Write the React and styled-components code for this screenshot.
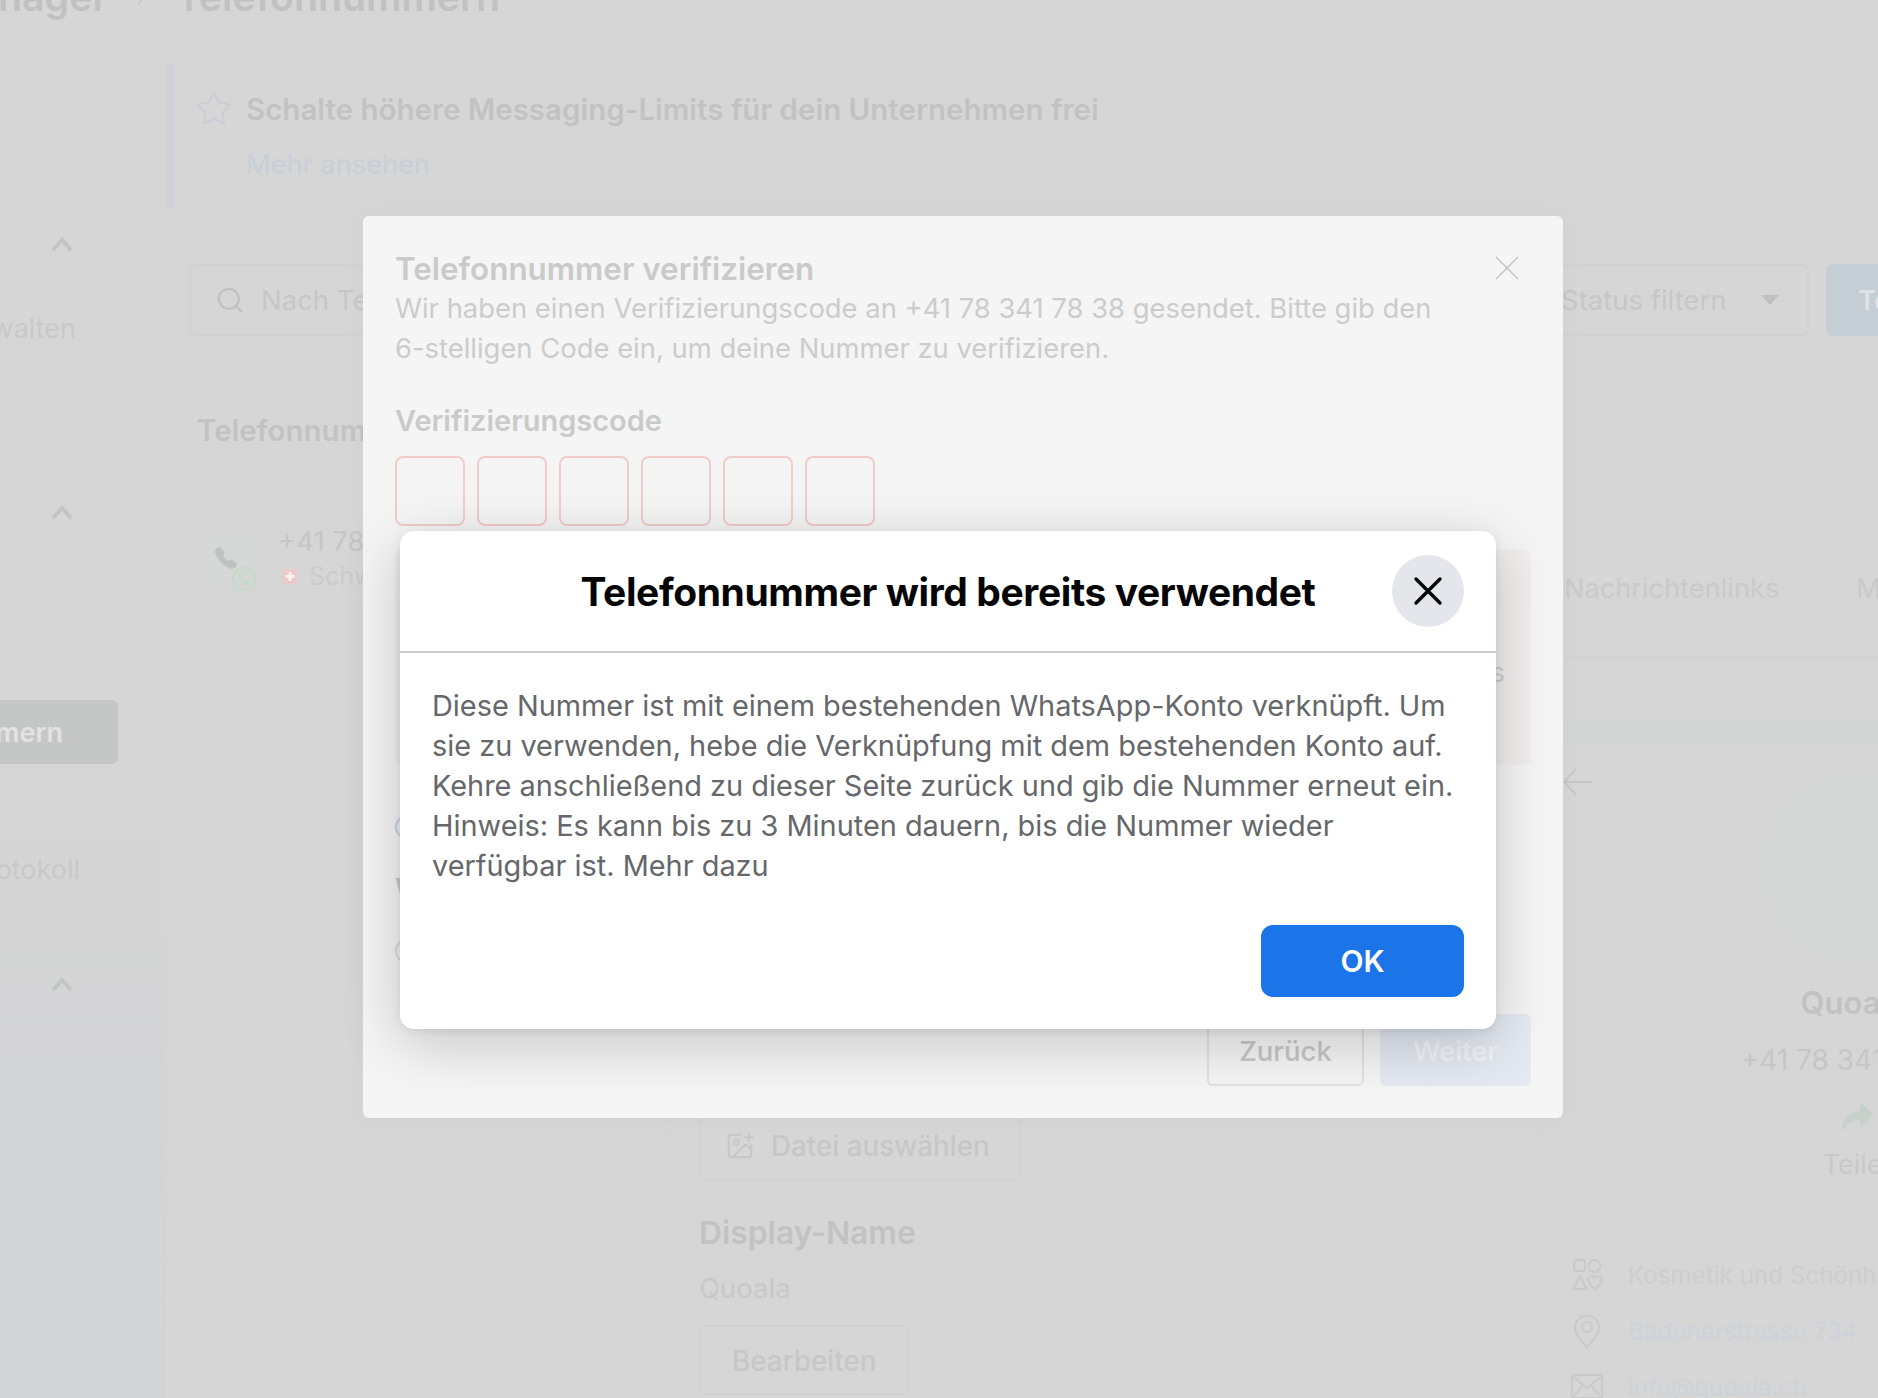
import React from "react";
import styled, { createGlobalStyle } from "styled-components";
import { ChevronRight, ImagePlus, Search, Star } from "lucide-react";
import { BsTelephoneFill } from "react-icons/bs";
import { FaWhatsapp } from "react-icons/fa";

const GlobalStyle = createGlobalStyle`
  html, body {
    margin: 0;
    padding: 0;
    background: #d6d6d6;
  }
  * {
    box-sizing: border-box;
  }
  body {
    font-family: Inter, "Liberation Sans", sans-serif;
    -webkit-font-smoothing: antialiased;
  }
`;

const Page = styled.div`
  position: relative;
  display: flex;
  width: 1878px;
  height: 1398px;
  overflow: hidden;
  background: #d6d6d6;
`;

/* sidebar, scrolled off to the left in the picture */
const Sidebar = styled.aside`
  flex: 0 0 166px;
  min-width: 0;
  width: 166px;
  display: flex;
  flex-direction: column;
  background: linear-gradient(#d6d6d6 40%, #d3d4d6);
`;

const SideChevron = styled.div`
  display: flex;
  align-items: center;
  justify-content: flex-end;
  height: 24px;
  margin-top: ${(p) => p.$top}px;
  padding-right: 92px;
  color: #c3c4c4;
`;

const SideItem = styled.div`
  display: flex;
  justify-content: flex-end;
  height: 36px;
  margin-top: ${(p) => p.$top}px;
  padding-right: ${(p) => p.$right}px;
  font-size: 27px;
  line-height: 36px;
  color: #c8c9c9;
  white-space: nowrap;
`;

const SideActive = styled.div`
  display: flex;
  align-items: center;
  justify-content: flex-end;
  width: 118px;
  height: 64px;
  margin-top: ${(p) => p.$top}px;
  padding-right: 55px;
  border-radius: 0 6px 6px 0;
  background: #c5c7c6;
  color: #e2e3e3;
  font-size: 27px;
  font-weight: 600;
  white-space: nowrap;
`;

const Main = styled.main`
  flex: 1;
  min-width: 0;
  display: flex;
  flex-direction: column;
`;

const Breadcrumb = styled.div`
  display: flex;
  align-items: center;
  height: 40px;
  margin: -24px 0 0 -166px;
  font-size: 39.3px;
  font-weight: 600;
  color: #c0c2c2;
  white-space: nowrap;
`;

const CrumbFirst = styled.span`
  display: flex;
  justify-content: flex-end;
  width: 108px;
`;

const CrumbSep = styled.span`
  display: flex;
  justify-content: center;
  width: 68px;
  color: #c8c9c9;
`;

const Banner = styled.section`
  display: flex;
  gap: 13px;
  height: 144px;
  margin-top: 48px;
  padding: 27px 24px 27px 21px;
  border-left: 8px solid #cfd0d9;
  border-top: 1px solid #d3d4d4;
  border-radius: 6px 0 0 6px;
`;

const BannerStar = styled(Star)`
  flex: 0 0 38px;
  margin-top: -2px;
  color: #cbccd6;
`;

const BannerText = styled.div`
  display: flex;
  flex-direction: column;
  gap: 22px;
`;

const BannerTitle = styled.div`
  font-size: 29.5px;
  line-height: 34px;
  font-weight: 600;
  color: #c1c3c3;
  white-space: nowrap;
`;

const BannerLink = styled.div`
  font-size: 27.2px;
  line-height: 34px;
  color: #c7d0d9;
`;

const Toolbar = styled.section`
  display: flex;
  align-items: center;
  justify-content: space-between;
  height: 120px;
  margin-top: 32px;
  padding: 0 0 0 22px;
  border: 1px solid #d3d4d4;
  border-right: 0;
  border-radius: 6px 0 0 6px;
`;

const SearchBox = styled.div`
  display: flex;
  align-items: center;
  gap: 16px;
  width: 600px;
  height: 72px;
  padding: 0 24px;
  border: 2px solid #d1d2d2;
  border-radius: 6px;
  color: #c6c7c7;
  font-size: 27.5px;
  white-space: nowrap;
`;

const ToolbarRight = styled.div`
  display: flex;
  align-items: center;
  gap: 17px;
`;

const StatusSelect = styled.div`
  display: flex;
  align-items: center;
  justify-content: space-between;
  width: 260px;
  height: 72px;
  padding: 0 28px 0 10px;
  border: 2px solid #d1d2d2;
  border-radius: 6px;
  color: #c6c7c7;
  font-size: 27.5px;
  white-space: nowrap;
`;

const Caret = styled.span`
  width: 0;
  height: 0;
  border-left: 9px solid transparent;
  border-right: 9px solid transparent;
  border-top: 10px solid #bfc0c0;
`;

const AddButton = styled.div`
  display: flex;
  align-items: center;
  width: 52px;
  height: 72px;
  padding-left: 32px;
  overflow: hidden;
  border-radius: 6px 0 0 6px;
  background: #c5cdd5;
  color: #dfe3e7;
  font-size: 27.5px;
  font-weight: 600;
`;

const Columns = styled.div`
  flex: 1;
  min-height: 0;
  display: flex;
`;

const ListColumn = styled.section`
  flex: 0 0 498px;
  display: flex;
  flex-direction: column;
  padding-top: 12px;
`;

const ListHead = styled.div`
  display: flex;
  align-items: center;
  height: 114px;
  padding: 2px 30px 0;
  border: 1px solid #d3d4d4;
  font-size: 29.5px;
  font-weight: 600;
  color: #c1c3c3;
  white-space: nowrap;
`;

const NumberRow = styled.div`
  display: flex;
  gap: 14px;
  padding: 43px 0 0 34px;
`;

const NumberIcon = styled.div`
  position: relative;
  display: flex;
  align-items: center;
  justify-content: center;
  width: 64px;
  height: 64px;
  border-radius: 50%;
  background: #d5d7d6;
  color: #c0c1c1;
`;

const PhoneGlyph = styled(BsTelephoneFill)`
  transform: translate(-6px, -3px);
`;

const WaBadge = styled.span`
  position: absolute;
  right: 6px;
  bottom: 0;
  display: flex;
  color: #c4dbc9;
`;

const NumberText = styled.div`
  display: flex;
  flex-direction: column;
  gap: 3px;
  margin-top: -5px;
`;

const NumberValue = styled.div`
  font-size: 27.5px;
  line-height: 34px;
  color: #c5c6c6;
  white-space: nowrap;
`;

const Country = styled.div`
  display: flex;
  align-items: center;
  gap: 12px;
  padding-left: 5px;
  font-size: 25px;
  line-height: 30px;
  color: #cbcccc;
`;

const DetailColumn = styled.section`
  flex: 1;
  min-width: 0;
  display: flex;
  flex-direction: column;
`;

const Tabs = styled.nav`
  flex: 0 0 298px;
  display: flex;
  align-items: flex-end;
  gap: 77px;
  padding: 0 0 50px 900px;
  border-bottom: 2px solid #d2d3d3;
  font-size: 27.2px;
  line-height: 34px;
  color: #c9caca;
  white-space: nowrap;
`;

const DetailBody = styled.div`
  flex: 1;
  min-height: 0;
  display: flex;
`;

const FormColumn = styled.div`
  flex: 0 0 876px;
  display: flex;
  flex-direction: column;
  justify-content: flex-end;
  align-items: flex-start;
  padding: 0 0 3px 34px;
  border-left: 1px solid #d3d4d4;
  border-right: 1px solid #d3d4d4;
`;

const GhostButton = styled.div`
  display: flex;
  align-items: center;
  gap: 16px;
  width: ${(p) => p.$width}px;
  height: ${(p) => p.$height}px;
  padding: 2px ${(p) => p.$pad}px 0;
  border: 2px solid #d1d2d2;
  border-radius: 6px;
  font-size: 27.8px;
  font-weight: 500;
  color: #c6c7c7;
  white-space: nowrap;
`;

const FieldTitle = styled.div`
  margin-top: 33px;
  font-size: 31.8px;
  line-height: 38px;
  font-weight: 600;
  color: #c1c3c3;
`;

const FieldValue = styled.div`
  margin: 19px 0 20px;
  font-size: 27.5px;
  line-height: 34px;
  color: #c8c9c9;
`;

const Preview = styled.aside`
  flex: 0 0 604px;
  display: flex;
  flex-direction: column;
  padding-left: 23px;

  & > * {
    flex-shrink: 0;
  }
`;

const PreviewBar = styled.div`
  height: 30px;
  margin-top: 60px;
  background: #d4d6d5;
`;

const BackRow = styled.div`
  display: flex;
  height: 30px;
  margin: 20px 0 -26px -1px;
  color: #c6c7c7;
`;

const ProfileHead = styled.div`
  display: flex;
  flex-direction: column;
  align-items: center;
`;

const Avatar = styled.div`
  width: 192px;
  height: 192px;
  border-radius: 50%;
  background: #d5d6d6;
  box-shadow: 0 0 0 1px #d3d4d4;
`;

const ProfileName = styled.div`
  margin-top: 19px;
  font-size: 31px;
  line-height: 40px;
  font-weight: 600;
  color: #c1c3c3;
`;

const ProfilePhone = styled.div`
  margin-top: 19px;
  font-size: 28px;
  line-height: 36px;
  color: #c5c6c6;
  white-space: nowrap;
`;

const ShareIcon = styled.div`
  display: flex;
  margin: 23px 0 0 6px;
  color: #c7d1cb;
`;

const ShareLabel = styled.div`
  margin: 15px 0 0 14px;
  font-size: 27px;
  line-height: 34px;
  color: #c8c9c9;
`;

const InfoList = styled.ul`
  display: flex;
  flex-direction: column;
  gap: 22px;
  margin: 76px 0 0;
  padding: 0 0 0 8px;
  list-style: none;
`;

const InfoRow = styled.li`
  display: flex;
  align-items: center;
  gap: 25px;
  height: 34px;
  font-size: 24.2px;
  color: ${(p) => (p.$link ? "#ccd3da" : "#cdcece")};
  white-space: nowrap;
`;

const InfoGlyph = styled.span`
  display: flex;
  flex: 0 0 32px;
  color: #c8c9c9;
`;

/* first dialog, lying over the page */
const VerifyDialog = styled.div`
  position: absolute;
  left: 363px;
  top: 216px;
  display: flex;
  flex-direction: column;
  width: 1200px;
  height: 902px;
  padding: 36px 32px 32px 32px;
  border-radius: 6px;
  background: #f5f5f5;
  box-shadow: 0 0 24px rgba(0, 0, 0, 0.03);
`;

const VerifyClose = styled.div`
  position: absolute;
  top: 40px;
  right: 44px;
  display: flex;
  color: #c4c5c5;
`;

const VerifyTitle = styled.div`
  font-size: 31.4px;
  line-height: 34px;
  font-weight: 600;
  color: #c9caca;
`;

const VerifyText = styled.p`
  margin: 2px 0 0;
  font-size: 27.4px;
  line-height: 40px;
  color: #cbcccc;
  white-space: nowrap;
`;

const CodeLabel = styled.div`
  margin-top: 35px;
  font-size: 29px;
  line-height: 36px;
  font-weight: 600;
  color: #c9caca;
`;

const CodeRow = styled.div`
  display: flex;
  gap: 12px;
  margin-top: 17px;
`;

const CodeBox = styled.div`
  width: 70px;
  height: 70px;
  border: 2px solid #f1ccc9;
  border-radius: 8px;
`;

const ErrorBox = styled.div`
  height: 215px;
  margin-top: 24px;
  padding: 30px 26px 0 0;
  display: flex;
  align-items: center;
  justify-content: flex-end;
  border-radius: 6px;
  background: #f2eeed;
  color: #cfcfcf;
  font-size: 27px;
`;

const PeekRadio = styled.div`
  flex: 0 0 24px;
  width: 24px;
  height: 24px;
  margin-top: ${(p) => p.$top}px;
  border: 2px solid ${(p) => p.$color};
  border-radius: 50%;
`;

const PeekLetter = styled.div`
  margin-top: 32px;
  font-size: 29px;
  font-weight: 600;
  line-height: 36px;
  color: #c9caca;
`;

const VerifyFooter = styled.div`
  display: flex;
  justify-content: flex-end;
  gap: 16px;
  margin-top: auto;
`;

const BackButton = styled.div`
  display: flex;
  align-items: center;
  justify-content: center;
  width: 157px;
  height: 72px;
  padding-top: 2px;
  border: 2px solid #e1e1e1;
  border-radius: 6px;
  font-size: 27.5px;
  font-weight: 500;
  color: #c6c7c7;
`;

const NextButton = styled.div`
  display: flex;
  align-items: center;
  justify-content: center;
  width: 151px;
  height: 72px;
  padding-top: 2px;
  border-radius: 6px;
  background: #e4e9f2;
  font-size: 27.5px;
  font-weight: 500;
  color: #f2f4f8;
`;

/* second dialog on top of the first */
const AlertDialog = styled.div`
  position: absolute;
  left: 400px;
  top: 531px;
  display: flex;
  flex-direction: column;
  width: 1096px;
  height: 498px;
  border-radius: 14px;
  background: #fff;
  box-shadow: 0 14px 60px rgba(0, 0, 0, 0.2), 0 2px 8px rgba(0, 0, 0, 0.08);
`;

const AlertHead = styled.header`
  position: relative;
  display: flex;
  align-items: center;
  justify-content: center;
  flex: 0 0 122px;
  padding-top: 2px;
  border-bottom: 2px solid #cdccd3;
`;

const AlertTitle = styled.h2`
  margin: 0;
  font-size: 39px;
  line-height: 48px;
  font-weight: 700;
  letter-spacing: -0.4px;
  color: #050505;
`;

const CloseCircle = styled.button`
  position: absolute;
  top: 24px;
  right: 32px;
  display: flex;
  align-items: center;
  justify-content: center;
  width: 72px;
  height: 72px;
  padding: 0;
  border: 0;
  border-radius: 50%;
  background: #e4e6eb;
  color: #050505;
`;

const AlertBody = styled.p`
  margin: 0;
  padding: 33px 32px 0;
  font-size: 28.9px;
  line-height: 40px;
  color: #65676b;
  white-space: nowrap;
`;

const AlertFooter = styled.div`
  display: flex;
  justify-content: flex-end;
  margin-top: auto;
  padding: 0 32px 32px;
`;

const OkButton = styled.button`
  width: 203px;
  height: 72px;
  border: 0;
  border-radius: 12px;
  background: #1b74e8;
  color: #fff;
  font-family: inherit;
  font-size: 30px;
  font-weight: 600;
`;

const UpChevron = () => (
  <svg width="24" height="16" viewBox="0 0 24 16" fill="none" stroke="currentColor" strokeWidth="4">
    <path d="M3 14L12 4l9 10" />
  </svg>
);

const BackArrow = () => (
  <svg width="30" height="28" viewBox="0 0 30 28" fill="none" stroke="currentColor" strokeWidth="2">
    <path d="M14 1L2 14l12 13M2 14h28" />
  </svg>
);

const CategoryIcon = () => (
  <svg width="32" height="32" viewBox="0 0 32 32" fill="none" stroke="currentColor" strokeWidth="1.8">
    <rect x="3" y="1" width="11" height="11" rx="3" />
    <circle cx="23.5" cy="7" r="6" />
    <path d="M9 17l6.5 13h-13z" strokeLinejoin="round" />
    <path d="M24 30c-4-3-7-5.5-7-9 0-4 5-5 7-2 2-3 7-2 7 2 0 3.500-3 6-7 9z" strokeLinejoin="round" />
  </svg>
);

const PinIcon = () => (
  <svg width="32" height="34" viewBox="0 0 32 34" fill="none" stroke="currentColor" strokeWidth="1.8">
    <path d="M16 33C9 25 4 20 4 13.500a12 12 0 0 1 24 0C28 20 23 25 16 33z" strokeLinejoin="round" />
    <circle cx="16" cy="13" r="5" />
  </svg>
);

const MailIcon = () => (
  <svg width="32" height="26" viewBox="0 0 32 26" fill="none" stroke="currentColor" strokeWidth="1.8">
    <rect x="1" y="1" width="30" height="23" rx="2" />
    <path d="M1.500 2L16 14 30.500 2M1.500 23.500L12 11M30.500 23.500L20 11" />
  </svg>
);

const ShareArrow = () => (
  <svg width="34" height="32" viewBox="0 0 34 32" fill="currentColor">
    <path d="M20 1l14 13-14 13v-8C12 19 6 22 2 31c0-12 6-20 18-21z" />
  </svg>
);

const SwissFlag = () => (
  <svg width="14" height="15" viewBox="0 0 14 15">
    <rect width="14" height="15" fill="#efc9c9" />
    <path d="M5.500 3h3v3h3v3h-3v3h-3V9h-3V6h3z" fill="#f6f0f0" />
  </svg>
);

const tabs = ["Nachrichtenlinks", "Metadaten"];
const codeFields = [0, 1, 2, 3, 4, 5];

export default function App() {
  return (
    <>
      <GlobalStyle />
      <Page>
        <Sidebar>
          <SideChevron $top={232}>
            <UpChevron />
          </SideChevron>
          <SideItem $top={55} $right={90}>verwalten</SideItem>
          <SideChevron $top={153}>
            <UpChevron />
          </SideChevron>
          <SideActive $top={176}>Telefonnummern</SideActive>
          <SideItem $top={88} $right={86}>Aktivitätsprotokoll</SideItem>
          <SideChevron $top={84}>
            <UpChevron />
          </SideChevron>
        </Sidebar>

        <Main>
          <Breadcrumb>
            <CrumbFirst>Manager</CrumbFirst>
            <CrumbSep>
              <ChevronRight size={30} strokeWidth={1.5} />
            </CrumbSep>
            <span>Telefonnummern</span>
          </Breadcrumb>

          <Banner>
            <BannerStar size={38} strokeWidth={1.2} />
            <BannerText>
              <BannerTitle>Schalte höhere Messaging-Limits für dein Unternehmen frei</BannerTitle>
              <BannerLink>Mehr ansehen</BannerLink>
            </BannerText>
          </Banner>

          <Toolbar>
            <SearchBox>
              <Search size={30} strokeWidth={1.8} color="#c0c1c1" />
              Nach Telefonnummer suchen
            </SearchBox>
            <ToolbarRight>
              <StatusSelect>
                Status filtern
                <Caret />
              </StatusSelect>
              <AddButton>Telefonnummer</AddButton>
            </ToolbarRight>
          </Toolbar>

          <Columns>
            <ListColumn>
              <ListHead>Telefonnummern</ListHead>
              <NumberRow>
                <NumberIcon>
                  <PhoneGlyph size={22} />
                  <WaBadge>
                    <FaWhatsapp size={28} />
                  </WaBadge>
                </NumberIcon>
                <NumberText>
                  <NumberValue>+41 78 341 78 38</NumberValue>
                  <Country>
                    <SwissFlag />
                    Schweiz
                  </Country>
                </NumberText>
              </NumberRow>
            </ListColumn>

            <DetailColumn>
              <Tabs>
                {tabs.map((tab) => (
                  <span key={tab}>{tab}</span>
                ))}
              </Tabs>
              <DetailBody>
                <FormColumn>
                  <GhostButton $pad={24} $height={72} $width={322}>
                    <ImagePlus size={30} strokeWidth={1.6} />
                    Datei auswählen
                  </GhostButton>
                  <FieldTitle>Display-Name</FieldTitle>
                  <FieldValue>Quoala</FieldValue>
                  <GhostButton $pad={31} $height={70} $width={210}>Bearbeiten</GhostButton>
                </FormColumn>
                <Preview>
                  <PreviewBar />
                  <BackRow>
                    <BackArrow />
                  </BackRow>
                  <ProfileHead>
                    <Avatar />
                    <ProfileName>Quoala</ProfileName>
                    <ProfilePhone>+41 78 341 78 38</ProfilePhone>
                    <ShareIcon>
                      <ShareArrow />
                    </ShareIcon>
                    <ShareLabel>Teilen</ShareLabel>
                  </ProfileHead>
                  <InfoList>
                    <InfoRow>
                      <InfoGlyph>
                        <CategoryIcon />
                      </InfoGlyph>
                      Kosmetik und Schönheit
                    </InfoRow>
                    <InfoRow $link>
                      <InfoGlyph>
                        <PinIcon />
                      </InfoGlyph>
                      Badenerstrasse 734
                    </InfoRow>
                    <InfoRow $link>
                      <InfoGlyph>
                        <MailIcon />
                      </InfoGlyph>
                      info@quoala.ch
                    </InfoRow>
                  </InfoList>
                </Preview>
              </DetailBody>
            </DetailColumn>
          </Columns>
        </Main>

        <VerifyDialog>
          <VerifyClose>
            <svg width="24" height="24" viewBox="0 0 24 24" fill="none" stroke="currentColor" strokeWidth="1.6">
              <path d="M1 1l22 22M23 1L1 23" />
            </svg>
          </VerifyClose>
          <VerifyTitle>Telefonnummer verifizieren</VerifyTitle>
          <VerifyText>
            Wir haben einen Verifizierungscode an +41 78 341 78 38 gesendet. Bitte gib den
            <br />
            6-stelligen Code ein, um deine Nummer zu verifizieren.
          </VerifyText>
          <CodeLabel>Verifizierungscode</CodeLabel>
          <CodeRow>
            {codeFields.map((field) => (
              <CodeBox key={field} />
            ))}
          </CodeRow>
          <ErrorBox>s</ErrorBox>
          <PeekRadio $top={50} $color="#c5d6ea" />
          <PeekLetter>W</PeekLetter>
          <PeekRadio $top={32} $color="#dddddd" />
          <VerifyFooter>
            <BackButton>Zurück</BackButton>
            <NextButton>Weiter</NextButton>
          </VerifyFooter>
        </VerifyDialog>

        <AlertDialog>
          <AlertHead>
            <AlertTitle>Telefonnummer wird bereits verwendet</AlertTitle>
            <CloseCircle>
              <svg width="30" height="30" viewBox="0 0 30 30" fill="none" stroke="currentColor" strokeWidth="3.4" strokeLinecap="round">
                <path d="M3 3l24 24M27 3L3 27" />
              </svg>
            </CloseCircle>
          </AlertHead>
          <AlertBody>
            Diese Nummer ist mit einem bestehenden WhatsApp-Konto verknüpft. Um
            <br />
            sie zu verwenden, hebe die Verknüpfung mit dem bestehenden Konto auf.
            <br />
            Kehre anschließend zu dieser Seite zurück und gib die Nummer erneut ein.
            <br />
            Hinweis: Es kann bis zu 3 Minuten dauern, bis die Nummer wieder
            <br />
            verfügbar ist. Mehr dazu
          </AlertBody>
          <AlertFooter>
            <OkButton>OK</OkButton>
          </AlertFooter>
        </AlertDialog>
      </Page>
    </>
  );
}
